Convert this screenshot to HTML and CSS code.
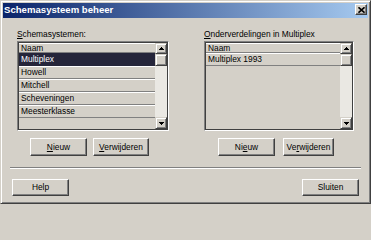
FILE: index.html
```html
<!DOCTYPE html>
<html>
<head>
<meta charset="utf-8">
<link rel="stylesheet" href="styles.css">
</head>
<body>
<div class="window">
  <div class="titlebar">
    <span class="title">Schemasysteem beheer</span>
    <span class="close"><svg width="7" height="6" viewBox="0 0 7 6"><path d="M0.5 0.3L6.5 5.7M6.5 0.3L0.5 5.7" stroke="#000" stroke-width="1.6" fill="none"/></svg></span>
  </div>
  <div class="body">
    <div class="columns">
      <div class="col">
        <div class="label"><u>S</u>chemasystemen:</div>
        <div class="list">
          <div class="rows">
            <div class="row head">Naam</div>
            <div class="row sel">Multiplex</div>
            <div class="row">Howell</div>
            <div class="row">Mitchell</div>
            <div class="row">Scheveningen</div>
            <div class="row">Meesterklasse</div>
            <div class="fill"></div>
          </div>
          <div class="scrollbar">
            <div class="sb-btn up"><svg width="5" height="3" viewBox="0 0 5 3"><path d="M2 0h1v1h1v1h1v1H0V2h1V1h1z"/></svg></div>
            <div class="thumb"></div>
            <div class="track"></div>
            <div class="sb-btn down"><svg width="5" height="3" viewBox="0 0 5 3"><path d="M0 0h5v1H4v1H3v1H2V2H1V1H0z"/></svg></div>
          </div>
        </div>
        <div class="btnrow l">
          <div class="btn"><span><u>N</u>ieuw</span></div>
          <div class="btn w56"><span><u>V</u>erwijderen</span></div>
        </div>
      </div>
      <div class="col">
        <div class="label"><u>O</u>nderverdelingen in Multiplex</div>
        <div class="list">
          <div class="rows">
            <div class="row head">Naam</div>
            <div class="row">Multiplex 1993</div>
            <div class="fill"></div>
          </div>
          <div class="scrollbar">
            <div class="sb-btn up"><svg width="5" height="3" viewBox="0 0 5 3"><path d="M2 0h1v1h1v1h1v1H0V2h1V1h1z"/></svg></div>
            <div class="thumb"></div>
            <div class="track"></div>
            <div class="sb-btn down"><svg width="5" height="3" viewBox="0 0 5 3"><path d="M0 0h5v1H4v1H3v1H2V2H1V1H0z"/></svg></div>
          </div>
        </div>
        <div class="btnrow r">
          <div class="btn"><span>Ni<u>e</u>uw</span></div>
          <div class="btn w51"><span>Ve<u>r</u>wijderen</span></div>
        </div>
      </div>
    </div>
    <div class="sep"></div>
    <div class="footer">
      <div class="btn low"><span>Help</span></div>
      <div class="btn low"><span>Sluiten</span></div>
    </div>
  </div>
</div>
</body>
</html>
```

FILE: styles.css
```css
* { box-sizing: border-box; }
body {
  margin: 0;
  background: #d4d0c8;
  font-family: "Liberation Sans", Arial, sans-serif;
  font-size: 8.4px;
  color: #000;
}
u { text-decoration: underline; text-underline-offset: 1px; }
.window {
  width: 371px;
  height: 204px;
  border: 1px solid;
  border-color: #d4d0c8 #404040 #404040 #d4d0c8;
  box-shadow: inset 1px 1px #fff, inset -1px -1px #808080;
  padding: 2px;
  display: flex;
  flex-direction: column;
  background: #d4d0c8;
}
.titlebar {
  height: 15px;
  flex: none;
  background: linear-gradient(to right, #0a246a, #a6caf0);
  display: flex;
  justify-content: space-between;
  padding: 0 1px;
}
.title {
  color: #fff;
  font-weight: bold;
  font-size: 9.6px;
  line-height: 13px;
  white-space: nowrap;
}
.close {
  width: 12px;
  height: 11px;
  margin-top: 1px;
  background: #d4d0c8;
  border: 1px solid;
  border-color: #fff #404040 #404040 #fff;
  box-shadow: inset -1px -1px #808080;
  display: flex;
  align-items: center;
  justify-content: center;
}
.body {
  flex: 1;
  padding: 11px 7px 0 7px;
  display: flex;
  flex-direction: column;
}
.columns {
  display: grid;
  grid-template-columns: 152px 150px;
  column-gap: 35px;
  padding: 0 7px;
}
.label {
  line-height: 10px;
  height: 10px;
  margin-bottom: 2px;
  white-space: nowrap;
}
.list {
  height: 90px;
  display: flex;
  border: 1px solid;
  border-color: #808080 #fff #fff #808080;
  box-shadow: inset 0 0 0 1px #404040;
  padding: 1px;
}
.rows {
  flex: 1;
  display: flex;
  flex-direction: column;
}
.row {
  height: 13px;
  flex: none;
  border-top: 1px solid #fff;
  border-bottom: 1px solid #808080;
  line-height: 11px;
  padding-left: 2px;
  white-space: nowrap;
}
.row.head {
  height: 10px;
  line-height: 8px;
}
.row.sel {
  background: #25253a;
  border-top-color: #25253a;
  border-bottom-color: #25253a;
  color: #fff;
}
.fill { flex: 1; }
.scrollbar {
  width: 12px;
  display: flex;
  flex-direction: column;
}
.sb-btn, .thumb {
  background: #d4d0c8;
  border: 1px solid;
  border-color: #d4d0c8 #404040 #404040 #d4d0c8;
  box-shadow: inset 1px 1px #fff, inset -1px -1px #808080;
  display: flex;
  align-items: center;
  justify-content: center;
  flex: none;
}
.sb-btn.up { height: 11px; }
.sb-btn.down { height: 12px; }
.thumb { height: 12px; }
.track {
  flex: 1;
  background: #eae8e3;
}
.btnrow {
  display: flex;
  margin-top: 7px;
  height: 18px;
}
.btnrow.l { padding-left: 13px; gap: 6px; }
.btnrow.r { padding-left: 14px; gap: 8px; }
.btn {
  height: 18px;
  width: 57px;
  background: #d4d0c8;
  border: 1px solid;
  border-color: #fff #404040 #404040 #fff;
  box-shadow: inset -1px -1px #808080;
  display: flex;
  align-items: center;
  justify-content: center;
  line-height: 10px;
  padding-bottom: 1px;
  white-space: nowrap;
}
.btn.w56 { width: 56px; }
.btn.w51 { width: 51px; }
.btn.low { height: 17px; }
.sep {
  margin-top: 11px;
  height: 2px;
  border-top: 1px solid #808080;
  border-bottom: 1px solid #fff;
}
.footer {
  display: flex;
  justify-content: space-between;
  padding: 0 2px;
  margin-top: 10px;
}
```
